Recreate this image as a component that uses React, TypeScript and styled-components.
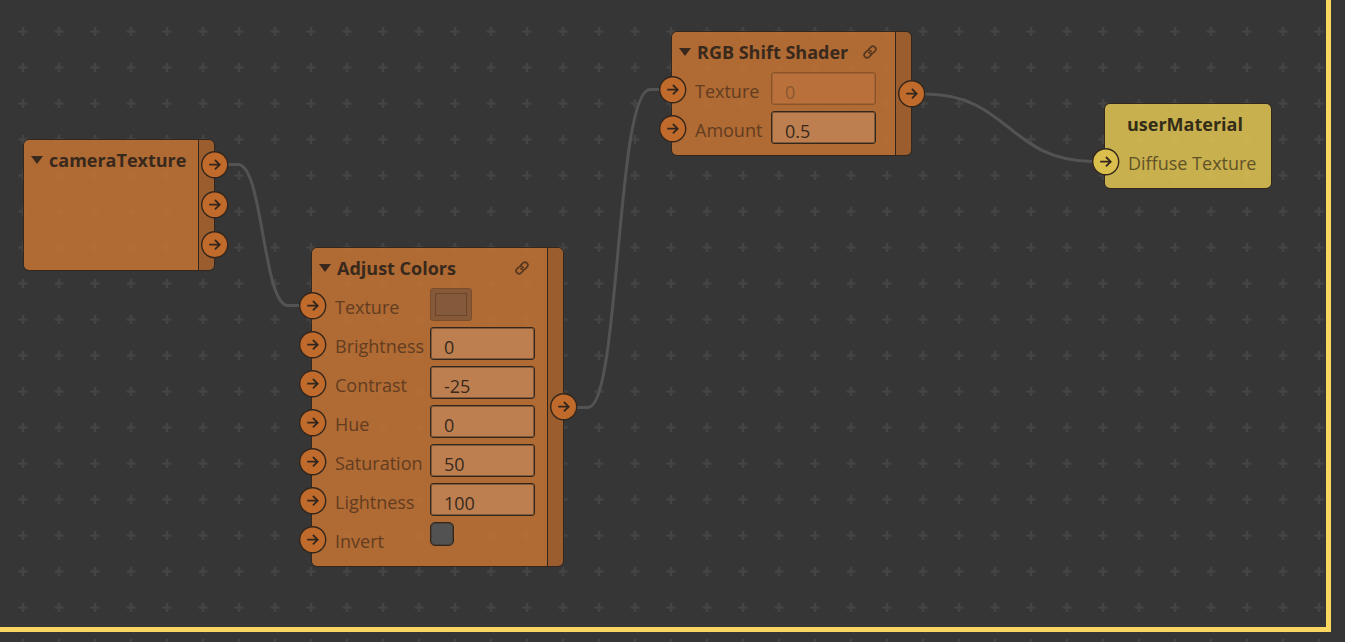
import React, { useId } from "react";
import styled, { createGlobalStyle } from "styled-components";

const GlobalStyle = createGlobalStyle`
  * { box-sizing: border-box; }
  body {
    margin: 0;
    background: #363636;
    font-family: "Open Sans", "Noto Sans", sans-serif;
    overflow: hidden;
  }
`;

const ink = "#33271d";

type Tone = "orange" | "yellow";

const tones = {
  orange: { body: "rgba(194, 114, 52, 0.88)", strip: "#9b5c2e", port: "#c06b2c", title: "#38291c", label: "#623d20" },
  yellow: { body: "rgba(222, 193, 82, 0.88)", strip: "#b29a40", port: "#dbbf4c", title: "#332c18", label: "#5f5327" },
};

const Canvas = styled.main`
  position: relative;
  height: 100vh;
  padding: 0 14px 10px 0;
`;

const Selection = styled.div`
  position: relative;
  height: 100%;
  border: solid #fbd762;
  border-width: 0 5px 5px 0;
`;

const Backdrop = styled.svg`
  position: absolute;
  top: 0;
  left: 0;
  width: 100%;
  height: 100%;
`;

const NodeBox = styled.section<{ $x: number; $y: number; $tone: Tone }>`
  position: absolute;
  left: ${(p) => p.$x}px;
  top: ${(p) => p.$y}px;
  display: flex;
  border: 1px solid ${ink};
  border-radius: 6px;
  color: ${(p) => tones[p.$tone].title};
`;

const NodeBody = styled.div<{ $tone: Tone; $width: number; $minHeight?: number; $closed: boolean }>`
  width: ${(p) => p.$width}px;
  min-height: ${(p) => p.$minHeight ?? 0}px;
  padding-bottom: 7px;
  background: ${(p) => tones[p.$tone].body};
  border-radius: ${(p) => (p.$closed ? "5px" : "5px 0 0 5px")};
`;

const Header = styled.header<{ $inset: number }>`
  display: flex;
  align-items: center;
  height: 38px;
  padding: 2px 18px 0 ${(p) => p.$inset}px;
`;

const Toggle = styled.button`
  display: flex;
  padding: 0;
  margin-right: 6px;
  border: 0;
  background: none;
  color: inherit;
`;

const Title = styled.h2`
  flex: 1;
  margin: 0;
  font-size: 18px;
  line-height: 24px;
  font-weight: 700;
  white-space: nowrap;
`;

const LinkButton = styled.button`
  display: flex;
  padding: 0;
  border: 0;
  background: none;
  color: #57371e;
`;

const Outputs = styled.div<{ $tone: Tone }>`
  display: flex;
  flex-direction: column;
  justify-content: center;
  gap: 12px;
  width: 16px;
  padding-left: 2px;
  border-left: 1px solid ${ink};
  border-radius: 0 5px 5px 0;
  background: ${(p) => tones[p.$tone].strip};
`;

const PortButton = styled.button`
  display: flex;
  flex: none;
  width: 28px;
  height: 28px;
  padding: 0;
  border: 0;
  border-radius: 50%;
  background: none;
`;

const Row = styled.div`
  display: flex;
  align-items: center;
  height: 39px;
  margin-left: -13px;
`;

const Label = styled.label<{ $tone: Tone; $width: number }>`
  width: ${(p) => p.$width}px;
  padding: 3px 0 0 8px;
  font-size: 18px;
  line-height: 24px;
  white-space: nowrap;
  color: ${(p) => tones[p.$tone].label};
`;

const Control = styled.div`
  display: flex;
  align-self: flex-start;
  padding-top: 2px;
`;

const NumberInput = styled.input`
  width: 105px;
  height: 33px;
  padding: 7px 12px 0 13px;
  border: 1px solid ${ink};
  border-radius: 3px;
  outline: 1px solid rgba(51, 39, 29, 0.45);
  outline-offset: -2px;
  background: #bd7f50;
  color: #38291c;
  font: 18px/24px "Open Sans", "Noto Sans", sans-serif;

  &:disabled {
    border-color: #8a542b;
    outline-color: rgba(138, 84, 43, 0.45);
    background: #b9703b;
    color: #8a5730;
  }
`;

const Swatch = styled.input`
  appearance: none;
  width: 42px;
  height: 33px;
  padding: 4px;
  border: 1px solid #7b4d2c;
  border-radius: 3px;
  background: #865939;

  &::-webkit-color-swatch-wrapper { padding: 0; }
  &::-webkit-color-swatch { border: 1px solid #6a452b; border-radius: 0; }
`;

const Check = styled.input`
  appearance: none;
  width: 24px;
  height: 24px;
  margin: 0;
  border: 1px solid ${ink};
  border-radius: 5px;
  outline: 1px solid rgba(51, 39, 29, 0.4);
  outline-offset: -2px;
  background: #525252;
`;

function Port({ tone, name }: { tone: Tone; name: string }) {
  return (
    <PortButton type="button" aria-label={name}>
      <svg width="28" height="28" viewBox="0 0 28 28" fill="none">
        <circle cx="13.700" cy="13.800" r="13" fill={tones[tone].port} stroke={ink} strokeWidth="1.4" />
        <path d="M8.200 13.700H18.600M13.900 9L18.700 13.700L13.900 18.400" stroke={ink} strokeWidth="1.8" />
      </svg>
    </PortButton>
  );
}

function ChainIcon() {
  return (
    <svg width="14" height="14" viewBox="0 0 24 24" fill="none" stroke="currentColor" strokeWidth="2.9" strokeLinecap="round">
      <path d="M10 13a5 5 0 0 0 7.54.54l3-3a5 5 0 0 0-7.07-7.07l-3.5 3.5" />
      <path d="M14 11a5 5 0 0 0-7.54-.54l-3 3a5 5 0 0 0 7.07 7.07l3.5-3.5" />
    </svg>
  );
}

type Field = { label: string; kind?: "number" | "color" | "check" | "none"; value?: string; disabled?: boolean };

function FieldRow({ field, tone, labelWidth }: { field: Field; tone: Tone; labelWidth: number }) {
  const id = useId();
  return (
    <Row>
      <Port tone={tone} name={`${field.label} input`} />
      <Label as={field.kind === "none" ? "span" : "label"} htmlFor={field.kind === "none" ? undefined : id} $tone={tone} $width={labelWidth}>
        {field.label}
      </Label>
      <Control>
        {field.kind === "number" && <NumberInput id={id} type="text" defaultValue={field.value} disabled={field.disabled} />}
        {field.kind === "color" && <Swatch id={id} type="color" defaultValue={field.value} disabled={field.disabled} />}
        {field.kind === "check" && <Check id={id} type="checkbox" />}
      </Control>
    </Row>
  );
}

type NodeProps = {
  x: number;
  y: number;
  width: number;
  title: string;
  tone?: Tone;
  minHeight?: number;
  collapsible?: boolean;
  linked?: boolean;
  outputs?: number;
  labelWidth?: number;
  fields?: Field[];
};

function GraphNode({ x, y, width, title, tone = "orange", minHeight, collapsible = true, linked, outputs = 0, labelWidth = 0, fields = [] }: NodeProps) {
  return (
    <NodeBox $x={x} $y={y} $tone={tone}>
      <NodeBody $tone={tone} $width={width} $minHeight={minHeight} $closed={outputs === 0}>
        <Header $inset={collapsible ? 7 : 22}>
          {collapsible && (
            <Toggle type="button" aria-label={`Collapse ${title}`}>
              <svg width="12" height="8" viewBox="0 0 12 8">
                <path d="M0 0H12L6 8Z" fill="currentColor" />
              </svg>
            </Toggle>
          )}
          <Title>{title}</Title>
          {linked && (
            <LinkButton type="button" aria-label={`Open ${title} link`}>
              <ChainIcon />
            </LinkButton>
          )}
        </Header>
        {fields.map((f) => (
          <FieldRow key={f.label} field={f} tone={tone} labelWidth={labelWidth} />
        ))}
      </NodeBody>
      {outputs > 0 && (
        <Outputs $tone={tone}>
          {Array.from({ length: outputs }, (_, i) => (
            <Port key={i} tone={tone} name={`${title} output ${i + 1}`} />
          ))}
        </Outputs>
      )}
    </NodeBox>
  );
}

export default function App() {
  return (
    <>
      <GlobalStyle />
      <Canvas>
        <Backdrop aria-hidden="true">
          <defs>
            <pattern id="grid" x="5" y="13" width="36" height="36" patternUnits="userSpaceOnUse">
              <path d="M13.500 18.500H22.500M18 14V23" stroke="#444444" strokeWidth="2.400" />
            </pattern>
          </defs>
          <rect width="100%" height="100%" fill="url(#grid)" />
          <g fill="none" stroke="#535353" strokeWidth="3">
            <path d="M228 164.500H238C263 164.500 263 305.500 288 305.500H300" />
            <path d="M576 407.500H588C620 407.500 616 89.500 650 89.500H660" />
            <path d="M925 94C1009 94 1009 161.500 1093 161.500" />
          </g>
        </Backdrop>
        <Selection>
          <GraphNode x={23} y={139} width={174} minHeight={130} title="cameraTexture" outputs={3} />
          <GraphNode
            x={311}
            y={247}
            width={235}
            title="Adjust Colors"
            linked
            outputs={1}
            labelWidth={103}
            fields={[
              { label: "Texture", kind: "color", value: "#855a3b", disabled: true },
              { label: "Brightness", kind: "number", value: "0" },
              { label: "Contrast", kind: "number", value: "-25" },
              { label: "Hue", kind: "number", value: "0" },
              { label: "Saturation", kind: "number", value: "50" },
              { label: "Lightness", kind: "number", value: "100" },
              { label: "Invert", kind: "check" },
            ]}
          />
          <GraphNode
            x={671}
            y={31}
            width={223}
            title="RGB Shift Shader"
            linked
            outputs={1}
            labelWidth={84}
            fields={[
              { label: "Texture", kind: "number", value: "0", disabled: true },
              { label: "Amount", kind: "number", value: "0.5" },
            ]}
          />
          <GraphNode
            x={1104}
            y={103}
            width={166}
            title="userMaterial"
            tone="yellow"
            collapsible={false}
            labelWidth={140}
            fields={[{ label: "Diffuse Texture", kind: "none" }]}
          />
        </Selection>
      </Canvas>
    </>
  );
}
